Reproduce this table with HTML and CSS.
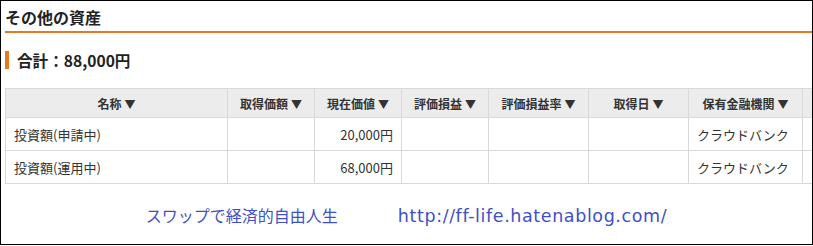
FILE: index.html
```html
<!DOCTYPE html>
<html lang="ja">
<head>
<meta charset="utf-8">
<title>その他の資産</title>
<link rel="stylesheet" href="styles.css">
</head>
<body>
<div class="frame">
  <h2 class="title">その他の資産</h2>
  <div class="total">合計：88,000円</div>
  <table class="assets">
    <colgroup>
      <col class="c-name"><col class="c-n"><col class="c-n"><col class="c-n"><col class="c-w"><col class="c-w"><col class="c-bank"><col class="c-extra">
    </colgroup>
    <thead>
      <tr>
        <th>名称<span class="arrow">▼</span></th>
        <th>取得価額<span class="arrow">▼</span></th>
        <th>現在価値<span class="arrow">▼</span></th>
        <th>評価損益<span class="arrow">▼</span></th>
        <th>評価損益率<span class="arrow">▼</span></th>
        <th>取得日<span class="arrow">▼</span></th>
        <th>保有金融機関<span class="arrow">▼</span></th>
        <th></th>
      </tr>
    </thead>
    <tbody>
      <tr>
        <td>投資額(申請中)</td><td></td><td class="num">20,000円</td><td></td><td></td><td></td><td>クラウドバンク</td><td></td>
      </tr>
      <tr>
        <td>投資額(運用中)</td><td></td><td class="num">68,000円</td><td></td><td></td><td></td><td>クラウドバンク</td><td></td>
      </tr>
    </tbody>
  </table>
  <div class="watermark"><span class="wm-name">スワップで経済的自由人生</span><span class="wm-url">http://ff-life.hatenablog.com/</span></div>
</div>
</body>
</html>
```
FILE: styles.css
```css
html, body {
  margin: 0;
  padding: 0;
  background: #fff;
}
.frame {
  box-sizing: border-box;
  width: 813px;
  height: 245px;
  border: 1px solid #000;
  padding-left: 4px;
  overflow: hidden;
  font-family: "Noto Sans CJK JP", "Noto Sans", sans-serif;
  color: #333;
}
.title {
  margin: 0;
  padding: 4px 0 2px 0;
  font-size: 16px;
  line-height: 24px;
  font-weight: bold;
  color: #222;
  border-bottom: 2px solid #e87722;
}
.total {
  margin-top: 18px;
  border-left: 4px solid #e87722;
  padding-left: 8px;
  font-size: 15.6px;
  line-height: 18px;
  font-weight: bold;
  color: #222;
}
.assets {
  margin-top: 19px;
  border-collapse: collapse;
  table-layout: fixed;
  width: 897px;
  font-size: 13px;
}
.c-name { width: 222px; }
.c-n { width: 87px; }
.c-w { width: 100px; }
.c-bank { width: 114px; }
.c-extra { width: 100px; }
.assets th, .assets td {
  border: 1px solid #d9d9d9;
  white-space: nowrap;
  overflow: hidden;
}
.assets th {
  background: #ececec;
  height: 28px;
  padding: 0 4px;
  font-size: 12px;
  font-weight: bold;
  text-align: center;
  color: #333;
}
.arrow {
  margin-left: 3px;
  font-size: 11px;
}
.assets td {
  height: 32px;
  padding: 0 8px;
  text-align: left;
  color: #333;
}
.assets td.num {
  text-align: right;
}
.watermark {
  margin-top: 19px;
  padding-right: 4px;
  display: flex;
  justify-content: center;
  align-items: baseline;
  gap: 60px;
  line-height: 24px;
  color: #3f4fc8;
}
.wm-name {
  font-size: 16px;
}
.wm-url {
  font-family: "DejaVu Sans", sans-serif;
  font-size: 17.5px;
  letter-spacing: 0.6px;
}
```
